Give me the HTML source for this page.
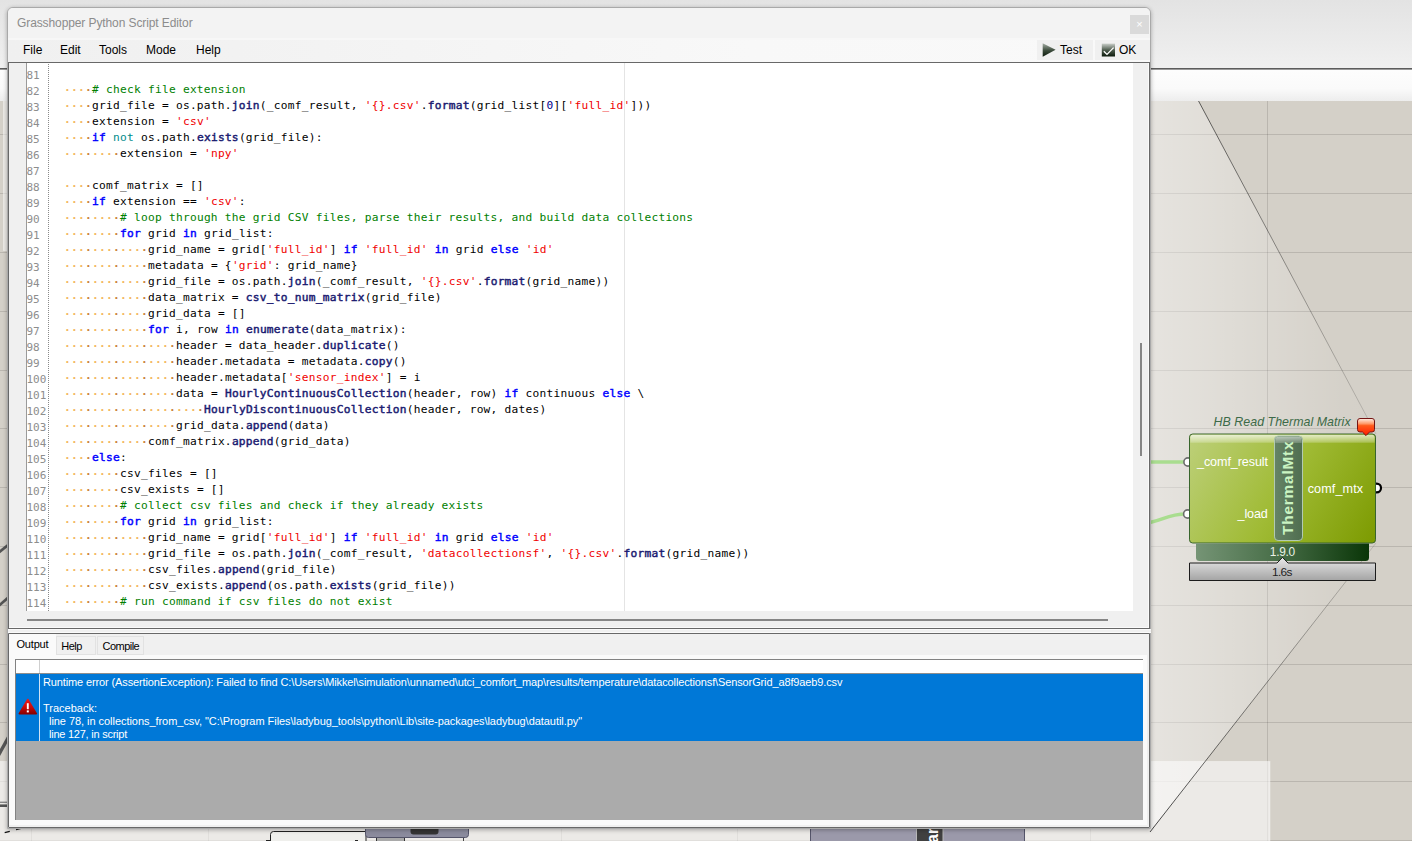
<!DOCTYPE html>
<html lang="en">
<head>
<meta charset="utf-8">
<title>Grasshopper Python Script Editor</title>
<style>
*{box-sizing:border-box;margin:0;padding:0}
html,body{width:1412px;height:841px;overflow:hidden;background:#d4d0c8}
body{position:relative;font-family:"Liberation Sans",sans-serif;font-size:12px;color:#000}
.abs{position:absolute}
/* ---------- background (grasshopper window) ---------- */
#topband{left:0;top:0;width:1412px;height:68px;background:linear-gradient(#e3e3e3,#f0f0f0)}
#topline{left:0;top:68px;width:1412px;height:2px;background:linear-gradient(#5c5c5c 0,#5c5c5c 1px,#9a9a9a 1px)}
#toolband{left:0;top:70px;width:1412px;height:31px;background:linear-gradient(#fdfdfd 0,#fafafa 60%,#ededed 100%)}
#canvas{left:0;top:101px;width:1412px;height:740px}
/* ---------- dialog ---------- */
#dlg{left:7px;top:7px;width:1144px;height:822px;background:#f0f0f0;border:1px solid #a9a9a9;border-radius:6px 6px 0 0;box-shadow:0 1px 4px rgba(0,0,0,.3)}
#titlebar{left:0;top:0;width:1142px;height:31px;background:#f3f3f3;border-radius:5px 5px 0 0}
#title{left:9px;top:7px;font-size:12px;letter-spacing:-.1px;color:#8c8c8c;white-space:nowrap;line-height:16px}
#close{left:1122px;top:7px;width:19px;height:19px;background:#dadada;color:#fff;font-size:11px;line-height:19px;text-align:center}
#menubar{left:0;top:30px;width:1142px;height:24px;background:linear-gradient(to right,#f0f0f0 0,#f2f2f2 20%,#f8f8f8 65%,#f9f9f9 100%);border-top:2px solid #f7f7f7}
.btn{top:0;height:20px;background:#f0f0f0}
.mi{position:absolute;top:3px;font-size:12px;line-height:14px;white-space:nowrap}
/* editor */
#editor{left:0;top:54px;width:1142px;height:567px;border:1px solid #686868;background:#f0f0f0;overflow:hidden;box-shadow:inset -1px -1px 0 #fafafa}
#gutter{left:0;top:0;width:18px;height:548px;background:#f0f0f0;border-right:1px solid #9a9a9a}
#codearea{left:18px;top:0;width:1106px;height:548px;background:#fff;overflow:hidden}
#dotline{left:21px;top:1px;width:1px;height:547px;background:repeating-linear-gradient(#8a8a8a 0,#8a8a8a 1px,transparent 1px,transparent 2px)}
#guide{left:597px;top:0;width:1px;height:548px;background:#e4e4e4}
#code{left:0;top:3px;font-family:"DejaVu Sans Mono","Liberation Mono",monospace;font-size:11.2px;letter-spacing:.257px;line-height:16px;color:#000}
.ln{height:16px;position:relative}
.no{position:absolute;left:-0.5px;top:2px;color:#8d8d8d;font-size:11px;letter-spacing:0}
.tx{position:absolute;left:37px;top:0;white-space:pre}
.ws{font-style:normal;font-weight:bold;color:#f3b75e;position:relative;top:1px}
.wd{font-style:normal;color:#c9823a}
.c{color:#008000}.s{color:#f00000}.k{color:#0000ff;font-weight:normal;-webkit-text-stroke:.45px #0000ff}.o{color:#008b8b}.f{color:#191970;font-weight:normal;-webkit-text-stroke:.45px #191970}.n{color:#00008b}
#vscroll{left:1124px;top:0;width:15px;height:564px;background:#f0f0f0}
#vthumb{left:1131px;top:280px;width:2px;height:113px;background:#868686}
#hthumb{left:18px;top:556px;width:1081px;height:2px;background:#868686}
/* bottom panel */
#split{left:0;top:621px;width:1143px;height:4px;background:linear-gradient(#fafafa 0,#fafafa 1px,#f0f0f0 1px,#f0f0f0 3px,#fafafa 3px)}
#bottom{left:0;top:625px;width:1142px;height:195px;border:1px solid #686868;border-radius:0 0 1px 1px;background:#f0f0f0}
.tab{position:absolute;top:2px;height:19px;font-size:11px;line-height:18px;white-space:nowrap;border:1px solid #e2e2e2;background:#f0f0f0}
.tab span{position:absolute;top:0;left:0}
#tabpage{left:0;top:21px;width:1138px;height:170px;background:#fafafa}
#tabsel{left:0;top:0;width:47px;height:22px;background:#fafafa;font-size:11px;line-height:18px;white-space:nowrap}
#list{left:6px;top:25px;width:1128px;height:161px;background:#ababab;border-top:1px solid #828282;border-left:1px solid #828282}
#row0{left:0;top:0;width:1127px;height:14px;background:#fff;border-bottom:1px solid #8e8e8e}
#row1{left:0;top:14px;width:1127px;height:67px;background:#0078d7;color:#fff;font-size:11px;line-height:13px;white-space:pre}
#row1 span{position:absolute;left:27px}
.vsep{position:absolute;left:23px;top:0;width:1px;height:81px;background:linear-gradient(#cfcfcf 0,#cfcfcf 13px,#8e8e8e 13px,#8e8e8e 14px,#cfe2f5 14px)}
</style>
</head>
<body>
<div id="topband" class="abs"></div>
<div id="topline" class="abs"></div>
<div id="toolband" class="abs"></div>
<div id="canvas" class="abs">
<svg class="abs" style="left:0;top:-101px" width="1412" height="841" viewBox="0 0 1412 841">
<defs>
  <clipPath id="cv"><rect x="0" y="101" width="1412" height="740"/></clipPath>
  <linearGradient id="lnk" gradientUnits="userSpaceOnUse" x1="1150" y1="0" x2="1376" y2="0">
    <stop offset="0" stop-color="#fff" stop-opacity=".42"/>
    <stop offset=".84" stop-color="#fff" stop-opacity=".03"/>
    <stop offset="1" stop-color="#fff" stop-opacity="0"/>
  </linearGradient>
  <linearGradient id="lnl" gradientUnits="userSpaceOnUse" x1="1150" y1="0" x2="1376" y2="0">
    <stop offset="0" stop-color="#000" stop-opacity=".72"/>
    <stop offset="1" stop-color="#000" stop-opacity=".12"/>
  </linearGradient>
  <linearGradient id="body" gradientUnits="userSpaceOnUse" x1="1189" y1="434" x2="1376" y2="543">
    <stop offset="0" stop-color="#bdd07a"/>
    <stop offset=".5" stop-color="#a0bb35"/>
    <stop offset="1" stop-color="#7c9a00"/>
  </linearGradient>
  <linearGradient id="gloss" x1="0" y1="0" x2="0" y2="1">
    <stop offset="0" stop-color="#fff" stop-opacity=".72"/>
    <stop offset="1" stop-color="#fff" stop-opacity=".22"/>
  </linearGradient>
  <linearGradient id="gloss2" x1="0" y1="0" x2="0" y2="1">
    <stop offset="0" stop-color="#fff" stop-opacity=".55"/>
    <stop offset="1" stop-color="#fff" stop-opacity=".18"/>
  </linearGradient>
  <linearGradient id="cap" gradientUnits="userSpaceOnUse" x1="1274" y1="0" x2="1303" y2="0">
    <stop offset="0" stop-color="#668466"/>
    <stop offset="1" stop-color="#4f6d4f"/>
  </linearGradient>
  <linearGradient id="ver" gradientUnits="userSpaceOnUse" x1="1196" y1="0" x2="1369" y2="0">
    <stop offset="0" stop-color="#759475"/>
    <stop offset=".45" stop-color="#4a704a"/>
    <stop offset="1" stop-color="#0a3608"/>
  </linearGradient>
  <linearGradient id="prof" x1="0" y1="0" x2="0" y2="1">
    <stop offset="0" stop-color="#e9e9e9"/>
    <stop offset="1" stop-color="#a4a4a4"/>
  </linearGradient>
  <linearGradient id="bal" x1="0" y1="0" x2="0" y2="1">
    <stop offset="0" stop-color="#fff0e6"/>
    <stop offset=".3" stop-color="#ff9a6a"/>
    <stop offset=".42" stop-color="#ff5a1a"/>
    <stop offset="1" stop-color="#ff1a00"/>
  </linearGradient>
</defs>
<g clip-path="url(#cv)">
  <!-- grid -->
  <g stroke="#000" stroke-opacity=".12" stroke-width="1" shape-rendering="crispEdges">
    <path d="M0 134.5H1412M0 193.5H1412M0 252.5H1412M0 311.5H1412M0 370.5H1412M0 428.5H1412M0 487.5H1412M0 546.5H1412M0 605.5H1412M0 664.5H1412M0 722.5H1412M0 781.5H1412M0 840.5H1412"/>
    <path d="M31.5 101V841M208.5 101V841M384.5 101V841M561.5 101V841M737.5 101V841M914.5 101V841M1090.5 101V841M1267.5 101V841"/>
  </g>
  <!-- widget panels -->
  <rect x="-1" y="761.5" width="1271" height="90" fill="#fff" fill-opacity=".56" stroke="#fff" stroke-opacity=".35"/>
  <rect x="3.5" y="90" width="20" height="160.5" fill="#fff" fill-opacity=".5" stroke="#fff" stroke-opacity=".4"/>
  <!-- link polygon dialog -> component -->
  <path d="M1149 8L1376 434V543L1150 832Z" fill="url(#lnk)"/>
  <path d="M1149 8L1376 434M1376 543L1150 832" stroke="url(#lnl)" stroke-width="1" fill="none"/>
  <!-- wires -->
  <g stroke="#555" stroke-width="2.8" fill="none">
    <path d="M-2 553L10 543.5"/>
    <path d="M-2 606.5L10 596"/>
    <path d="M-2 756L10 734.5" stroke-width="3.4"/>
    <path d="M-2 805.7H10" stroke-width="2.6"/>
    <path d="M-2 802.3H10" stroke="#8a8a8a" stroke-width="1.4"/>
  </g>
  <g stroke="#a9dd8f" stroke-width="3.4" fill="none" stroke-linecap="butt">
    <path d="M1140 462H1186"/>
    <path d="M1140 524C1162 522 1166 514 1186 514"/>
  </g>
  <!-- component: HB Read Thermal Matrix -->
  <g font-family="'Liberation Sans',sans-serif" style="opacity:.999">
    <text x="1213.6" y="426" font-size="12.4" font-style="italic" fill="#3c6a48" textLength="137" lengthAdjust="spacing">HB Read Thermal Matrix</text>
    <circle cx="1188" cy="462" r="4.1" fill="#fff" stroke="#6c6c6c" stroke-width="1.6"/>
    <circle cx="1187.7" cy="514" r="4.1" fill="#fff" stroke="#6c6c6c" stroke-width="1.6"/>
    <circle cx="1376.6" cy="488" r="4.4" fill="#fff" stroke="#000" stroke-width="2.2"/>
    <rect x="1189.5" y="434" width="186" height="109" rx="3.2" fill="url(#body)" stroke="#38652c" stroke-width="1"/>
    <path d="M1190.3 442.8V437.5Q1190.3 434.8 1193 434.8H1372Q1374.7 434.8 1374.7 437.5V442.8Z" fill="url(#gloss)"/>
    <rect x="1274.5" y="436" width="28" height="104.5" rx="3.6" fill="url(#cap)" stroke="#b2cab2" stroke-width="1"/>
    <path d="M1275.3 443V439.6Q1275.3 436.8 1278 436.8H1299Q1301.7 436.8 1301.7 439.6V443Z" fill="url(#gloss2)"/>
    <text transform="translate(1293.3 488.2) rotate(-90)" text-anchor="middle" font-size="15.3" font-weight="bold" fill="#caf4c2" textLength="93.5" lengthAdjust="spacing">ThermalMtx</text>
    <text x="1197" y="465.6" font-size="12.6" fill="#fff" textLength="71" lengthAdjust="spacing">_comf_result</text>
    <text x="1237.6" y="517.9" font-size="12.6" fill="#fff" textLength="30.2" lengthAdjust="spacing">_load</text>
    <text x="1307.7" y="492.8" font-size="12.6" fill="#fff" textLength="55.4" lengthAdjust="spacing">comf_mtx</text>
    <path d="M1196 543.4H1369V557.5Q1369 561 1365.5 561H1199.5Q1196 561 1196 557.5Z" fill="url(#ver)"/>
    <text x="1269.8" y="556.2" font-size="11.9" fill="#e9f1e4" textLength="25.3" lengthAdjust="spacing">1.9.0</text>
    <path d="M1189.5 563H1277L1282.5 557.4L1288 563H1375.5V580.5H1189.5Z" fill="url(#prof)" stroke="#1c1c1c" stroke-width="1" stroke-linejoin="miter"/>
    <text x="1271.9" y="575.7" font-size="11.8" fill="#1e1e1e" textLength="20.6" lengthAdjust="spacing">1.6s</text>
    <path d="M1360 418.5H1372Q1374.5 418.5 1374.5 421V429.5Q1374.5 432 1372 432H1369.6L1366 435.6L1362.4 432H1360Q1357.5 432 1357.5 429.5V421Q1357.5 418.5 1360 418.5Z" fill="url(#bal)" stroke="#741414" stroke-width="1"/>
  </g>

  <!-- objects peeking below the dialog -->
  <g font-family="'Liberation Sans',sans-serif">
    <path d="M270.5 845V834.5Q270.5 831.5 273.5 831.5H366V845Z" fill="#efefec" stroke="#222" stroke-width="1"/>
    <path d="M376.5 845V830H404.5V845" fill="#a9a9a9" stroke="#333" stroke-width="1"/>
    <path d="M463.5 830V845" stroke="#444" stroke-width="1"/>
    <path d="M365.5 820H468.5V834.5Q468.5 837.5 465.5 837.5H368.5Q365.5 837.5 365.5 834.5Z" fill="#8b8b9d" stroke="#55556a" stroke-width="1"/>
    <path d="M410.5 820H438.5V831.5Q438.5 834.5 435.5 834.5H413.5Q410.5 834.5 410.5 831.5Z" fill="#343434"/>
    <rect x="810.5" y="820.5" width="214" height="40" fill="#9b99aa" stroke="#55556a" stroke-width="1"/>
    <rect x="916.5" y="815" width="26.5" height="40" fill="#404040" stroke="#b9b9b9" stroke-width="1"/>
    <text transform="translate(937.5 843) rotate(-90)" font-size="16" font-weight="bold" fill="#fff">ar</text>
    <path d="M4.7 832.7L9.8 831.4M16 829.5L21 828.3" stroke="#111" stroke-width="1.3"/>
    <path d="M266 840.6h4M355 840.6h3" stroke="#111" stroke-width="1"/>
  </g>

</g>
</svg>

</div>

<div id="dlg" class="abs">
  <div id="titlebar" class="abs"></div>
  <div id="title" class="abs">Grasshopper Python Script Editor</div>
  <div id="close" class="abs">×</div>
  <div id="menubar" class="abs">
    <span class="mi" style="left:15px">File</span>
    <span class="mi" style="left:52px">Edit</span>
    <span class="mi" style="left:91px">Tools</span>
    <span class="mi" style="left:138px">Mode</span>
    <span class="mi" style="left:188px">Help</span>
    <div class="abs btn" style="left:1029px;width:56px"></div>
    <div class="abs btn" style="left:1087px;width:55px"></div>
    <svg class="abs" style="left:1029px;top:0" width="113" height="22" viewBox="1037 40 113 22">
      <defs>
        <linearGradient id="ig" x1="0" y1="0" x2="0" y2="1"><stop offset="0" stop-color="#a7afa7"/><stop offset=".55" stop-color="#3a4a3a"/><stop offset="1" stop-color="#0c1a0c"/></linearGradient>
        <linearGradient id="ig2" x1="0" y1="0" x2="0" y2="1"><stop offset="0" stop-color="#c9cec9"/><stop offset=".5" stop-color="#4e5c4e"/><stop offset="1" stop-color="#0c1a0c"/></linearGradient>
      </defs>
      <path d="M1042.7 43.2V56.7L1055.6 49.7Z" fill="url(#ig)"/>
      <rect x="1101.8" y="43.6" width="13.2" height="12.9" fill="url(#ig2)"/>
      <path d="M1103.8 51.2L1107 54.4L1113.6 47.6" fill="none" stroke="#fff" stroke-width="1.3"/>
    </svg>
    <span class="mi" style="left:1052px">Test</span>
    <span class="mi" style="left:1111px">OK</span>
  </div>
  <div id="editor" class="abs">
    <div id="gutter" class="abs"></div>
    <div id="codearea" class="abs">
      <div id="dotline" class="abs"></div>
      <div id="guide" class="abs"></div>
      <div id="code" class="abs">
<div class="ln"><span class="no">81</span><span class="tx"></span></div>
<div class="ln"><span class="no">82</span><span class="tx"><i class="ws">···<i class="wd">·</i></i><span class="c"># check file extension</span></span></div>
<div class="ln"><span class="no">83</span><span class="tx"><i class="ws">···<i class="wd">·</i></i>grid_file = os.path.<b class="f">join</b>(_comf_result, <span class="s">&#x27;{}.csv&#x27;</span>.<b class="f">format</b>(grid_list[<span class="n">0</span>][<span class="s">&#x27;full_id&#x27;</span>]))</span></div>
<div class="ln"><span class="no">84</span><span class="tx"><i class="ws">···<i class="wd">·</i></i>extension = <span class="s">&#x27;csv&#x27;</span></span></div>
<div class="ln"><span class="no">85</span><span class="tx"><i class="ws">···<i class="wd">·</i></i><b class="k">if</b> <span class="o">not</span> os.path.<b class="f">exists</b>(grid_file):</span></div>
<div class="ln"><span class="no">86</span><span class="tx"><i class="ws">···<i class="wd">·</i>···<i class="wd">·</i></i>extension = <span class="s">&#x27;npy&#x27;</span></span></div>
<div class="ln"><span class="no">87</span><span class="tx"></span></div>
<div class="ln"><span class="no">88</span><span class="tx"><i class="ws">···<i class="wd">·</i></i>comf_matrix = []</span></div>
<div class="ln"><span class="no">89</span><span class="tx"><i class="ws">···<i class="wd">·</i></i><b class="k">if</b> extension == <span class="s">&#x27;csv&#x27;</span>:</span></div>
<div class="ln"><span class="no">90</span><span class="tx"><i class="ws">···<i class="wd">·</i>···<i class="wd">·</i></i><span class="c"># loop through the grid CSV files, parse their results, and build data collections</span></span></div>
<div class="ln"><span class="no">91</span><span class="tx"><i class="ws">···<i class="wd">·</i>···<i class="wd">·</i></i><b class="k">for</b> grid <b class="k">in</b> grid_list:</span></div>
<div class="ln"><span class="no">92</span><span class="tx"><i class="ws">···<i class="wd">·</i>···<i class="wd">·</i>···<i class="wd">·</i></i>grid_name = grid[<span class="s">&#x27;full_id&#x27;</span>] <b class="k">if</b> <span class="s">&#x27;full_id&#x27;</span> <b class="k">in</b> grid <b class="k">else</b> <span class="s">&#x27;id&#x27;</span></span></div>
<div class="ln"><span class="no">93</span><span class="tx"><i class="ws">···<i class="wd">·</i>···<i class="wd">·</i>···<i class="wd">·</i></i>metadata = {<span class="s">&#x27;grid&#x27;</span>: grid_name}</span></div>
<div class="ln"><span class="no">94</span><span class="tx"><i class="ws">···<i class="wd">·</i>···<i class="wd">·</i>···<i class="wd">·</i></i>grid_file = os.path.<b class="f">join</b>(_comf_result, <span class="s">&#x27;{}.csv&#x27;</span>.<b class="f">format</b>(grid_name))</span></div>
<div class="ln"><span class="no">95</span><span class="tx"><i class="ws">···<i class="wd">·</i>···<i class="wd">·</i>···<i class="wd">·</i></i>data_matrix = <b class="f">csv_to_num_matrix</b>(grid_file)</span></div>
<div class="ln"><span class="no">96</span><span class="tx"><i class="ws">···<i class="wd">·</i>···<i class="wd">·</i>···<i class="wd">·</i></i>grid_data = []</span></div>
<div class="ln"><span class="no">97</span><span class="tx"><i class="ws">···<i class="wd">·</i>···<i class="wd">·</i>···<i class="wd">·</i></i><b class="k">for</b> i, row <b class="k">in</b> <b class="f">enumerate</b>(data_matrix):</span></div>
<div class="ln"><span class="no">98</span><span class="tx"><i class="ws">···<i class="wd">·</i>···<i class="wd">·</i>···<i class="wd">·</i>···<i class="wd">·</i></i>header = data_header.<b class="f">duplicate</b>()</span></div>
<div class="ln"><span class="no">99</span><span class="tx"><i class="ws">···<i class="wd">·</i>···<i class="wd">·</i>···<i class="wd">·</i>···<i class="wd">·</i></i>header.metadata = metadata.<b class="f">copy</b>()</span></div>
<div class="ln"><span class="no">100</span><span class="tx"><i class="ws">···<i class="wd">·</i>···<i class="wd">·</i>···<i class="wd">·</i>···<i class="wd">·</i></i>header.metadata[<span class="s">&#x27;sensor_index&#x27;</span>] = i</span></div>
<div class="ln"><span class="no">101</span><span class="tx"><i class="ws">···<i class="wd">·</i>···<i class="wd">·</i>···<i class="wd">·</i>···<i class="wd">·</i></i>data = <b class="f">HourlyContinuousCollection</b>(header, row) <b class="k">if</b> continuous <b class="k">else</b> \</span></div>
<div class="ln"><span class="no">102</span><span class="tx"><i class="ws">···<i class="wd">·</i>···<i class="wd">·</i>···<i class="wd">·</i>···<i class="wd">·</i>···<i class="wd">·</i></i><b class="f">HourlyDiscontinuousCollection</b>(header, row, dates)</span></div>
<div class="ln"><span class="no">103</span><span class="tx"><i class="ws">···<i class="wd">·</i>···<i class="wd">·</i>···<i class="wd">·</i>···<i class="wd">·</i></i>grid_data.<b class="f">append</b>(data)</span></div>
<div class="ln"><span class="no">104</span><span class="tx"><i class="ws">···<i class="wd">·</i>···<i class="wd">·</i>···<i class="wd">·</i></i>comf_matrix.<b class="f">append</b>(grid_data)</span></div>
<div class="ln"><span class="no">105</span><span class="tx"><i class="ws">···<i class="wd">·</i></i><b class="k">else</b>:</span></div>
<div class="ln"><span class="no">106</span><span class="tx"><i class="ws">···<i class="wd">·</i>···<i class="wd">·</i></i>csv_files = []</span></div>
<div class="ln"><span class="no">107</span><span class="tx"><i class="ws">···<i class="wd">·</i>···<i class="wd">·</i></i>csv_exists = []</span></div>
<div class="ln"><span class="no">108</span><span class="tx"><i class="ws">···<i class="wd">·</i>···<i class="wd">·</i></i><span class="c"># collect csv files and check if they already exists</span></span></div>
<div class="ln"><span class="no">109</span><span class="tx"><i class="ws">···<i class="wd">·</i>···<i class="wd">·</i></i><b class="k">for</b> grid <b class="k">in</b> grid_list:</span></div>
<div class="ln"><span class="no">110</span><span class="tx"><i class="ws">···<i class="wd">·</i>···<i class="wd">·</i>···<i class="wd">·</i></i>grid_name = grid[<span class="s">&#x27;full_id&#x27;</span>] <b class="k">if</b> <span class="s">&#x27;full_id&#x27;</span> <b class="k">in</b> grid <b class="k">else</b> <span class="s">&#x27;id&#x27;</span></span></div>
<div class="ln"><span class="no">111</span><span class="tx"><i class="ws">···<i class="wd">·</i>···<i class="wd">·</i>···<i class="wd">·</i></i>grid_file = os.path.<b class="f">join</b>(_comf_result, <span class="s">&#x27;datacollectionsf&#x27;</span>, <span class="s">&#x27;{}.csv&#x27;</span>.<b class="f">format</b>(grid_name))</span></div>
<div class="ln"><span class="no">112</span><span class="tx"><i class="ws">···<i class="wd">·</i>···<i class="wd">·</i>···<i class="wd">·</i></i>csv_files.<b class="f">append</b>(grid_file)</span></div>
<div class="ln"><span class="no">113</span><span class="tx"><i class="ws">···<i class="wd">·</i>···<i class="wd">·</i>···<i class="wd">·</i></i>csv_exists.<b class="f">append</b>(os.path.<b class="f">exists</b>(grid_file))</span></div>
<div class="ln"><span class="no">114</span><span class="tx"><i class="ws">···<i class="wd">·</i>···<i class="wd">·</i></i><span class="c"># run command if csv files do not exist</span></span></div>

      </div>
    </div>
    <div id="vscroll" class="abs"></div>
    <div id="vthumb" class="abs"></div>
    <div id="hthumb" class="abs"></div>
  </div>
  <div id="split" class="abs"></div>
  <div id="bottom" class="abs">
    <div id="tabpage" class="abs"></div>
    <div id="tabsel" class="abs"><span class="abs" style="left:7.5px;top:1px;letter-spacing:-.2px">Output</span></div>
    <div class="tab" style="left:47px;width:40px"><span style="left:4.2px;letter-spacing:-.5px">Help</span></div>
    <div class="tab" style="left:87.5px;width:47px"><span style="left:5px;letter-spacing:-.52px">Compile</span></div>
    <div id="list" class="abs">
      <div id="row0" class="abs"></div>
      <div id="row1" class="abs"><span id="e1" style="top:2px;letter-spacing:-.126px">Runtime error (AssertionException): Failed to find C:\Users\Mikkel\simulation\unnamed\utci_comfort_map\results/temperature\datacollectionsf\SensorGrid_a8f9aeb9.csv</span><span id="e2" style="top:28px">Traceback:</span><span id="e3" style="top:41px;left:33px;letter-spacing:-.047px">line 78, in collections_from_csv, "C:\Program Files\ladybug_tools\python\Lib\site-packages\ladybug\datautil.py"</span><span id="e4" style="top:54px;left:33px;letter-spacing:-.24px">line 127, in script</span></div>
      <div class="vsep"></div>
      <svg class="abs" style="left:1px;top:37px" width="22" height="19" viewBox="0 0 22 19">
        <defs><linearGradient id="eg" x1="0" y1="0" x2="0" y2="1"><stop offset="0" stop-color="#f01818"/><stop offset=".55" stop-color="#c80a0a"/><stop offset="1" stop-color="#8c0000"/></linearGradient></defs>
        <path d="M10.8 2.6L19.2 16.6H2.4Z" fill="url(#eg)" stroke="url(#eg)" stroke-width="1.8" stroke-linejoin="round"/>
        <path d="M10.8 6.2V12.2" stroke="#fff" stroke-width="1.9"/>
        <rect x="9.8" y="13.4" width="2" height="2" fill="#fff"/>
      </svg>
    </div>
  </div>
</div>
<!--COMPONENT-->
</body>
</html>
